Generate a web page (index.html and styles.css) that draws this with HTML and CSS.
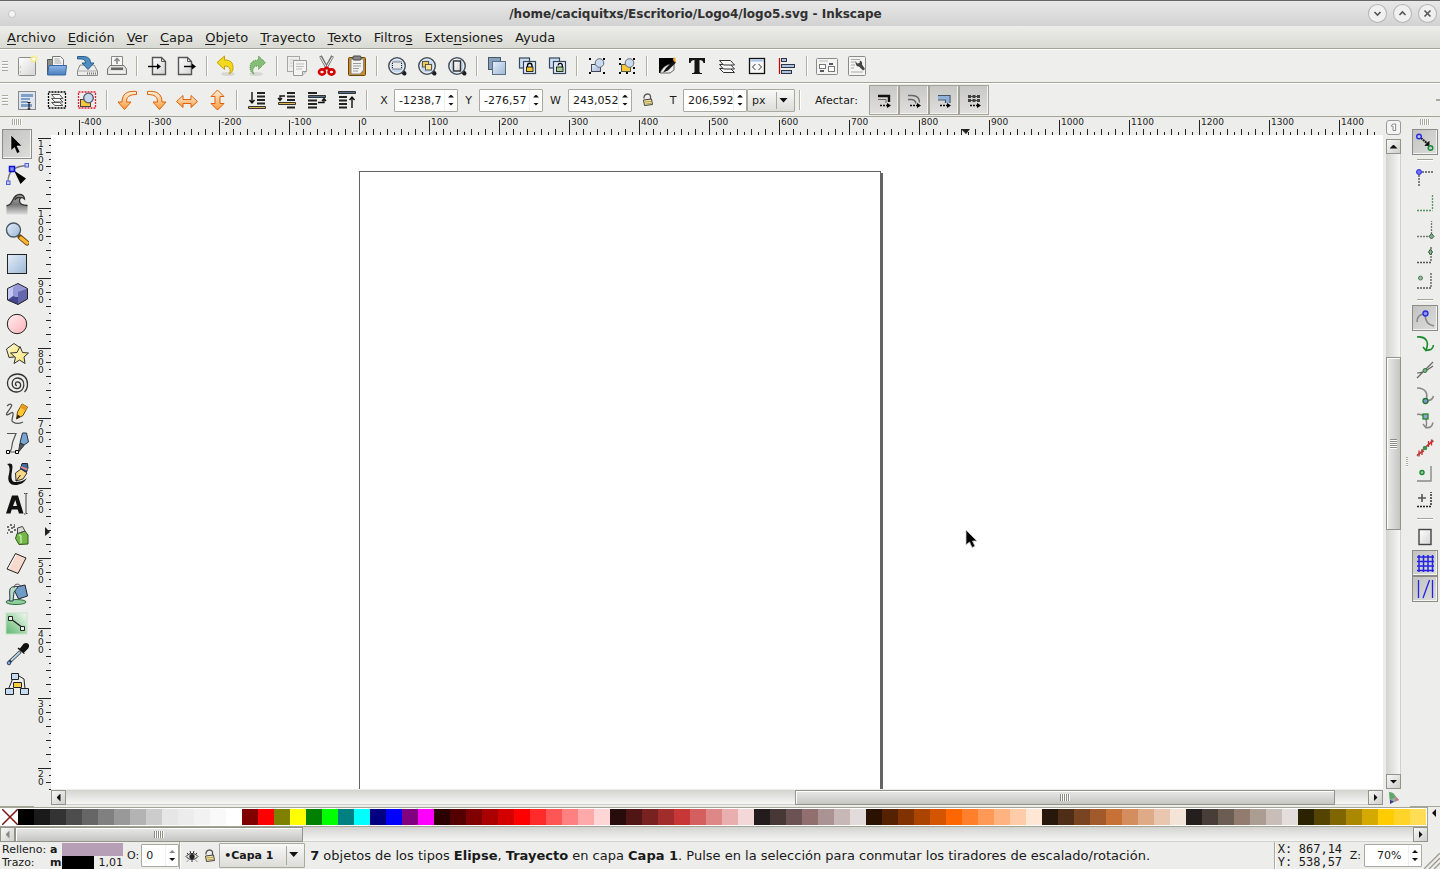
FILE: index.html
```html
<!DOCTYPE html>
<html lang="es">
<head>
<meta charset="utf-8">
<title>logo5.svg - Inkscape</title>
<link rel="stylesheet" href="styles.css">
</head>
<body>
<svg class="defs" aria-hidden="true">
  <defs>
    <linearGradient id="blue" x1="0" y1="0" x2="1" y2="1"><stop offset="0" stop-color="#e4eefa"/><stop offset="1" stop-color="#9db8d6"/></linearGradient>
    <linearGradient id="deep" x1="0" y1="0" x2="0" y2="1"><stop offset="0" stop-color="#8fb6e6"/><stop offset="1" stop-color="#4a7dbd"/></linearGradient>
    <linearGradient id="paper" x1="0" y1="0" x2="1" y2="1"><stop offset="0" stop-color="#ffffff"/><stop offset="1" stop-color="#d4d4d4"/></linearGradient>
    <linearGradient id="orange" x1="0" y1="0" x2="0" y2="1"><stop offset="0" stop-color="#fff0dc"/><stop offset="1" stop-color="#ff9a3c"/></linearGradient>
    <linearGradient id="gold" x1="0" y1="0" x2="1" y2="1"><stop offset="0" stop-color="#fffde0"/><stop offset="1" stop-color="#f7df62"/></linearGradient>
    <linearGradient id="pink" x1="0" y1="0" x2="1" y2="1"><stop offset="0" stop-color="#fff0f1"/><stop offset="1" stop-color="#ffb0b8"/></linearGradient>
    <linearGradient id="green" x1="0" y1="1" x2="1" y2="0"><stop offset="0" stop-color="#5cb56c"/><stop offset="1" stop-color="#f4fbf4"/></linearGradient>
    <linearGradient id="smoke" x1="0" y1="0" x2="0" y2="1"><stop offset="0" stop-color="#aaa"/><stop offset=".5" stop-color="#777"/><stop offset="1" stop-color="#dcdcdc"/></linearGradient>
    <symbol id="lens" viewBox="0 0 24 24"><path d="M17.500 17.500l2 2" stroke="#1c1f22" stroke-width="4" stroke-linecap="round"/><circle cx="12" cy="12" r="8.200" fill="#c3d6ec" stroke="#4b5157" stroke-width="1.600"/><circle cx="12" cy="12" r="6.900" fill="none" stroke="#eef5fc" stroke-width=".9"/></symbol>
    <symbol id="lock" viewBox="0 0 12 14"><path d="M2 5.500C1.500 0 8 0 8.500 3v3" fill="none" stroke="#555" stroke-width="1.300"/><path d="M1.500 7l8-1 1 5.500-8 1z" fill="#efe3a4" stroke="#444"/><path d="M3 9l6-.7M3.500 11l6-.7" stroke="#b9a04c"/></symbol>
  </defs>
</svg>

<div class="window">
  <header class="titlebar">
    <span class="titlebar-dot"></span>
    <h1 class="title">/home/caciquitxs/Escritorio/Logo4/logo5.svg - Inkscape</h1>
    <div class="window-buttons">
      <button class="window-button" aria-label="Minimizar"><svg viewBox="0 0 17 17"><path d="M5.500 7l3 3 3-3"/></svg></button>
      <button class="window-button" aria-label="Maximizar"><svg viewBox="0 0 17 17"><path d="M5.500 10l3-3 3 3"/></svg></button>
      <button class="window-button" aria-label="Cerrar"><svg viewBox="0 0 17 17"><path d="M5.500 5.500l6 6M11.500 5.500l-6 6"/></svg></button>
    </div>
  </header>

  <nav class="menubar">
    <button class="menu"><u>A</u>rchivo</button>
    <button class="menu"><u>E</u>dición</button>
    <button class="menu"><u>V</u>er</button>
    <button class="menu"><u>C</u>apa</button>
    <button class="menu"><u>O</u>bjeto</button>
    <button class="menu"><u>T</u>rayecto</button>
    <button class="menu"><u>T</u>exto</button>
    <button class="menu">Filtro<u>s</u></button>
    <button class="menu">Exte<u>n</u>siones</button>
    <button class="menu">Ayuda</button>
  </nav>

  <div class="toolbar" role="toolbar" aria-label="Comandos">
    <span class="grip"></span>
    <button class="tool" aria-label="Nuevo"><svg class="icon" viewBox="0 0 24 24"><rect x="3.500" y="3.500" width="17" height="18" rx="1" fill="url(#paper)" stroke="#8a8c88"/><path d="M5.500 12v2M5.500 17v2" stroke="#c4c4c4"/><circle cx="19" cy="5" r="3.600" fill="#f9ee7a" opacity=".8"/><circle cx="19" cy="5" r="1.700" fill="#fff"/></svg></button>
    <button class="tool" aria-label="Abrir"><svg class="icon" viewBox="0 0 24 24"><path d="M2.500 20V5.500h7l1 2h8V20z" fill="#8b8f8c" stroke="#555753"/><path d="M7.500 12V2.500h8l3 3V12z" fill="#f4f4f4" stroke="#777"/><path d="M9.500 5h5M9.500 7h6M9.500 9h7" stroke="#aaa"/><path d="M4 11.500h17.500l-1 9.500H2.500z" fill="url(#deep)" stroke="#3465a4"/></svg></button>
    <button class="tool" aria-label="Guardar"><svg class="icon" viewBox="0 0 24 24"><path d="M5 11h14l3.500 6v4.500h-20V17z" fill="#ececea" stroke="#888a85"/><path d="M2.500 17h20" stroke="#aaa"/><path d="M12 19.500h9" stroke="#777" stroke-width="2" stroke-dasharray="1 1"/><path d="M2.500 2.500H8c5 0 7.500 2 7.500 6.500h3.500l-6 6.500L7 9h3.500c0-3-2-4.500-8-4z" fill="#4f8cc0" stroke="#2b5d8c"/></svg></button>
    <button class="tool" aria-label="Imprimir"><svg class="icon" viewBox="0 0 24 24"><path d="M6.500 13V2.500h11V13" fill="#f7f7f7" stroke="#888"/><path d="M12 4v6M9.500 7L12 4.500 14.500 7" fill="none" stroke="#888" stroke-width="1.600"/><path d="M5 11.500h14l2.500 3.500v5.500h-19V15z" fill="#e0e0de" stroke="#777"/><rect x="6" y="13.500" width="12" height="2.500" fill="#666"/><path d="M4 18h16" stroke="#fff"/></svg></button>
    <span class="sep"></span>
    <button class="tool" aria-label="Importar"><svg class="icon" viewBox="0 0 24 24"><path d="M7.500 3.500h9l4 4v13h-13z" fill="url(#paper)" stroke="#555" stroke-width="1.400"/><path d="M16.500 3.500v4h4" fill="none" stroke="#555"/><path d="M3 12.500h9" stroke="#000" stroke-width="1.400"/><path d="M12 9.500v6l4-3z"/></svg></button>
    <button class="tool" aria-label="Exportar"><svg class="icon" viewBox="0 0 24 24"><path d="M3.500 3.500h9l4 4v13h-13z" fill="url(#paper)" stroke="#555" stroke-width="1.400"/><path d="M12.500 3.500v4h4" fill="none" stroke="#555"/><path d="M9 12.500h9" stroke="#000" stroke-width="1.400"/><path d="M17 9.500v6l4-3z"/></svg></button>
    <span class="sep"></span>
    <button class="tool" aria-label="Deshacer"><svg class="icon" viewBox="0 0 24 24"><ellipse cx="13" cy="20" rx="7" ry="2" fill="#d7d7d4"/><path d="M2 8.500L9.500 2v4c6 0 8.500 2.500 8.500 7.500 0 3-1 5-4 6.500 1-2 1.500-3 1-4.500-.5-2.500-2-3.500-5.500-3.500v3.500z" fill="#f2d91e" stroke="#c4a000"/></svg></button>
    <button class="tool" aria-label="Rehacer"><svg class="icon" viewBox="0 0 24 24"><ellipse cx="11" cy="20" rx="7" ry="2" fill="#d7d7d4"/><path d="M20.500 8.500L13.500 2v4C8 6 5 8.500 5 13.500c0 3 1 5 4 6.500-1-2-1.500-3-1-4.500.5-2.500 2-3.500 5.500-3.500v3.500z" fill="#86bd77" stroke="#4d9140" stroke-dasharray="1 1"/></svg></button>
    <span class="sep"></span>
    <button class="tool" aria-label="Copiar"><svg class="icon" viewBox="0 0 24 24"><rect x="2.500" y="2.500" width="12" height="15" fill="#efefee" stroke="#a6a8a3"/><path d="M4.500 6h8M4.500 9h3M4.500 12h3" stroke="#c9c9c9"/><path d="M8.500 6.500h13v11l-4 4h-9z" fill="#f4f4f3" stroke="#999b96"/><path d="M11 10h8M11 12.500h8M11 15h6" stroke="#bbb"/><path d="M17.500 21.500v-4h4" fill="#ddd" stroke="#999"/></svg></button>
    <button class="tool" aria-label="Cortar"><svg class="icon" viewBox="0 0 24 24"><path d="M5.500 2l7 13M17.500 2l-7 13" stroke="#777" stroke-width="3"/><path d="M5.500 3l7 12M17.500 3l-7 12" stroke="#eee"/><ellipse cx="7" cy="18" rx="3" ry="2.600" fill="none" stroke="#d40000" stroke-width="2.600"/><ellipse cx="16.500" cy="18" rx="3" ry="2.600" fill="none" stroke="#d40000" stroke-width="2.600"/><path d="M9 15.500l2.500-2 3 2" stroke="#d40000" stroke-width="2.400" fill="none"/></svg></button>
    <button class="tool" aria-label="Pegar"><svg class="icon" viewBox="0 0 24 24"><rect x="3.500" y="3.500" width="17" height="18" rx="1" fill="#c98a2b" stroke="#6f4706"/><path d="M6 5h12.500v11l-3.500 4H6z" fill="#f3f3f1" stroke="#888"/><rect x="8" y="2" width="8" height="4" rx="1" fill="#888" stroke="#444"/><path d="M8 9.500h8M8 12h8M8 14.500h6M8 17h5" stroke="#999"/></svg></button>
    <span class="sep"></span>
    <button class="tool" aria-label="Zoom a la selección"><svg class="icon" viewBox="0 0 24 24"><use href="#lens"/><rect x="7.500" y="8" width="9" height="7" fill="#e9e9e9" stroke="#222" stroke-dasharray="1 1"/></svg></button>
    <button class="tool" aria-label="Zoom al dibujo"><svg class="icon" viewBox="0 0 24 24"><use href="#lens"/><rect x="7.500" y="7.500" width="6" height="5.500" fill="#f3c84f" stroke="#555"/><rect x="10.500" y="10.500" width="6" height="5.500" fill="#ffe48d" stroke="#555"/></svg></button>
    <button class="tool" aria-label="Zoom a la página"><svg class="icon" viewBox="0 0 24 24"><use href="#lens"/><rect x="8.500" y="7" width="7" height="10" fill="url(#paper)" stroke="#333" stroke-width="1.400"/></svg></button>
    <span class="sep"></span>
    <button class="tool" aria-label="Duplicar"><svg class="icon" viewBox="0 0 24 24"><rect x="3.500" y="3.500" width="12" height="12" fill="#86a0bd" stroke="#47586b"/><rect x="7.500" y="7.500" width="13" height="13" fill="url(#blue)" stroke="#5b6f85"/></svg></button>
    <button class="tool" aria-label="Clonar"><svg class="icon" viewBox="0 0 24 24"><rect x="4.500" y="4" width="10" height="10" fill="#cfdff1" stroke="#33485e" stroke-width="1.200"/><rect x="8.500" y="7.500" width="12" height="12" fill="#e2ecf8" stroke="#33485e" stroke-width="1.200"/><path d="M12.500 13v-1.500a2.200 2.200 0 0 1 4.500 0V13" fill="none" stroke="#000" stroke-width="1.300"/><rect x="11.500" y="13" width="6.500" height="4.500" fill="#f6c52e" stroke="#000" stroke-width=".8"/></svg></button>
    <button class="tool" aria-label="Desvincular clon"><svg class="icon" viewBox="0 0 24 24"><rect x="4.500" y="4" width="10" height="10" fill="#cfdff1" stroke="#33485e" stroke-width="1.200"/><rect x="8.500" y="7.500" width="12" height="12" fill="#e2ecf8" stroke="#33485e" stroke-width="1.200"/><path d="M13 11.500a2.200 2.200 0 0 1 4.300-.5v2" fill="none" stroke="#000" stroke-width="1.300"/><rect x="11.500" y="13" width="6.500" height="4.500" fill="#a6cf8d" stroke="#000" stroke-width=".8"/></svg></button>
    <span class="sep"></span>
    <button class="tool" aria-label="Agrupar"><svg class="icon" viewBox="0 0 24 24"><path d="M4 4h2v2H4zM18 4h2v2h-2zM4 18h2v2H4zM18 18h2v2h-2z"/><rect x="6.500" y="10.500" width="9" height="7" fill="url(#blue)" stroke="#445"/><circle cx="14.500" cy="9" r="4.300" fill="#c9dbef" stroke="#667"/></svg></button>
    <button class="tool" aria-label="Desagrupar"><svg class="icon" viewBox="0 0 24 24"><path d="M4 4h2v2H4zM18 4h2v2h-2zM4 18h2v2H4zM18 18h2v2h-2zM4 9h2v2H4zM11 18h2v2h-2zM18 13h2v2h-2z"/><rect x="6.500" y="10.500" width="9" height="7" fill="#f7c737" stroke="#554"/><circle cx="14.500" cy="9" r="4.300" fill="#c9dbef" stroke="#667"/></svg></button>
    <span class="sep"></span>
    <button class="tool" aria-label="Relleno y borde"><svg class="icon" viewBox="0 0 24 24"><path d="M4 4h15v3l-9 9-4 3H4z" fill="#000"/><path d="M5 19c3-7 8-9 12-9l2-2v8l-4 3z" fill="#eee" stroke="#444" stroke-width=".8"/><path d="M19 6l2 2.500-8 8-5 2 3-4.500z" fill="#111"/><path d="M18.500 3.500l2 .5v5l-2.500-3z" fill="#f4a42c"/></svg></button>
    <button class="tool" aria-label="Texto y tipografía"><svg class="icon" viewBox="0 0 24 24"><path d="M4 4h16v5h-1.500c-.5-2-1.500-3-4-3v11.500c0 1 .8 1.500 2.500 1.500v1H7v-1c1.700 0 2.500-.5 2.500-1.500V6c-2.500 0-3.500 1-4 3H4z" fill="#151515"/></svg></button>
    <button class="tool" aria-label="Capas"><svg class="icon" viewBox="0 0 24 24"><g fill="#f8f8f8" stroke="#333"><path d="M4.500 14.500h11l4 4h-11z"/><path d="M4.500 10.500h11l4 4.500h-11z"/><path d="M4.500 6.500h11l4 4.500h-11z"/></g></svg></button>
    <button class="tool" aria-label="Editor XML"><svg class="icon" viewBox="0 0 24 24"><rect x="4.500" y="4.500" width="15" height="15" fill="#f6f6f6" stroke="#111" stroke-width="1.300"/><path d="M5 6.500h14" stroke="#a3c3e6" stroke-width="2"/><path d="M10.500 10l-3 3 3 3M13.500 10l3 3-3 3" fill="none" stroke="#333"/></svg></button>
    <button class="tool" aria-label="Alinear"><svg class="icon" viewBox="0 0 24 24"><path d="M4.500 4v16" stroke="#d40000" stroke-width="1.200"/><rect x="6.500" y="4.500" width="5" height="3" fill="#a9c3e4" stroke="#334"/><rect x="6.500" y="10.500" width="13" height="3" fill="#a9c3e4" stroke="#334"/><rect x="6.500" y="16.500" width="10" height="3" fill="#a9c3e4" stroke="#334"/></svg></button>
    <span class="sep"></span>
    <button class="tool" aria-label="Preferencias"><svg class="icon" viewBox="0 0 24 24"><rect x="1.500" y="4.500" width="21" height="16" rx="1" fill="#f4f4f3" stroke="#8a8c88"/><path d="M4 7h9" stroke="#bbb"/><rect x="4.500" y="10.500" width="6" height="4" fill="#fff" stroke="#777"/><rect x="13.500" y="12.500" width="6" height="5" fill="#fff" stroke="#777"/><path d="M5 16h4v2H5zM14 9h4v2h-4z" fill="#556"/></svg></button>
    <button class="tool" aria-label="Propiedades del documento"><svg class="icon" viewBox="0 0 24 24"><rect x="3.500" y="2.500" width="17" height="19" rx="1" fill="#f4f4f3" stroke="#8a8c88"/><path d="M6 5.500h9M6 8h5M6 11h4M6 14h3M6 18h12" stroke="#aaa"/><path d="M10.500 7.500l2 2 2-.5.500-2.500c2 1 2.500 2.500 2 4l3 4.500-2 1.500-4-4c-2 .5-3.500-1.500-3.500-5z" fill="#444"/></svg></button>
  </div>

  <div class="toolbar" role="toolbar" aria-label="Controles de selección">
    <span class="grip"></span>
    <button class="tool" aria-label="Seleccionar todo"><svg class="icon" viewBox="0 0 24 24"><rect x="3.500" y="3.500" width="17" height="18" fill="#dfe6ef" stroke="#888"/><path d="M6 6h12v3H6zM6 10h9v2H6zM6 13h7v2H6zM6 16h11v3H6z" fill="#7f9fc6"/><path d="M12.500 14.500H14V21h-1.500M15.500 14.500H14M14 21h1.500" stroke="#000" fill="none"/></svg></button>
    <button class="tool" aria-label="Seleccionar en todas las capas"><svg class="icon" viewBox="0 0 24 24"><rect x="3.500" y="4" width="17" height="16" fill="none" stroke="#000" stroke-width="1.300" stroke-dasharray="2 1"/><g fill="#fafafa" stroke="#555"><path d="M6.500 14.500h8l3.500 3h-8z"/><path d="M6.500 10.500h8l3.500 3.500h-8z"/><path d="M6.500 6.500h8l3.500 4h-8z"/></g></svg></button>
    <button class="tool" aria-label="Deseleccionar"><svg class="icon" viewBox="0 0 24 24"><rect x="3.500" y="4" width="17" height="16" fill="none" stroke="#e0203a" stroke-width="1.300" stroke-dasharray="2 1"/><rect x="5.500" y="11.500" width="10" height="7" fill="#f7c737" stroke="#444"/><circle cx="13.500" cy="10" r="4.800" fill="#c3d7ee" stroke="#556" stroke-width="1.300"/></svg></button>
    <span class="sep"></span>
    <button class="tool" aria-label="Rotar a la izquierda"><svg class="icon" viewBox="0 0 24 24"><path d="M21.500 3.500C12 2.500 7 6 7 14H3l6.500 7.500 6.500-7.500h-4.500C11.500 9 14 6.500 21.500 6.500z" fill="url(#orange)" stroke="#d9630a"/></svg></button>
    <button class="tool" aria-label="Rotar a la derecha"><svg class="icon" viewBox="0 0 24 24"><path d="M2.500 3.500C12 2.500 17 6 17 14h4l-6.500 7.500L8 14h4.500C12.500 9 10 6.500 2.500 6.500z" fill="url(#orange)" stroke="#d9630a"/></svg></button>
    <button class="tool" aria-label="Reflejar horizontalmente"><svg class="icon" viewBox="0 0 24 24"><path d="M1.500 13.500L8 7.500v4h8v-4l6.500 6-6.500 6v-4H8v4z" fill="url(#orange)" stroke="#d9630a"/></svg></button>
    <button class="tool" aria-label="Reflejar verticalmente"><svg class="icon" viewBox="0 0 24 24"><path d="M12.500 2l6.500 6.500h-4v7h4L12.500 22 6 15.500h4v-7H6z" fill="url(#orange)" stroke="#d9630a"/></svg></button>
    <span class="sep"></span>
    <button class="tool" aria-label="Bajar al fondo"><svg class="icon" viewBox="0 0 24 24"><path d="M12 5h8M12 8.500h8M12 12h8M12 15.500h8" stroke="#222" stroke-width="1.800"/><path d="M3.500 18.500h17v2h-17z" fill="#e2b84e" stroke="#333"/><path d="M7 4v10M4.500 12L7 15l2.500-3" fill="none" stroke="#111" stroke-width="1.400"/></svg></button>
    <button class="tool" aria-label="Bajar"><svg class="icon" viewBox="0 0 24 24"><path d="M12 5h8M12 8.500h8M12 12h8M12 19.500h8" stroke="#222" stroke-width="1.800"/><path d="M3.500 14.500h17v2h-17z" fill="#e2b84e" stroke="#333"/><path d="M10 8H5v4M3 10l2 2.500L7 10" fill="none" stroke="#111" stroke-width="1.300"/></svg></button>
    <button class="tool" aria-label="Elevar"><svg class="icon" viewBox="0 0 24 24"><path d="M3 5h9M3 12.500h9M3 16h9M3 19.500h9" stroke="#222" stroke-width="1.800"/><path d="M3.500 7.500h17v2h-17z" fill="#536f92" stroke="#333"/><path d="M13 14.500h6V11M17 13l2-2.500 2 2.500" fill="none" stroke="#111" stroke-width="1.300"/></svg></button>
    <button class="tool" aria-label="Elevar al frente"><svg class="icon" viewBox="0 0 24 24"><path d="M4 9h8M4 12.500h8M4 16h8M4 19.500h8" stroke="#222" stroke-width="1.800"/><path d="M3.500 3.500h17v2h-17z" fill="#536f92" stroke="#333"/><path d="M17 20V9.500M14.500 12L17 9l2.500 3" fill="none" stroke="#111" stroke-width="1.400"/></svg></button>
    <span class="sep"></span>
    <label class="caption caption-x" for="pos-x">X</label>
    <span class="spin"><input id="pos-x" class="spin-text" value="-1238,7"><span class="arrows"><button class="up" aria-label="Más"></button><button class="down" aria-label="Menos"></button></span></span>
    <label class="caption" for="pos-y">Y</label>
    <span class="spin"><input id="pos-y" class="spin-text" value="-276,57"><span class="arrows"><button class="up" aria-label="Más"></button><button class="down" aria-label="Menos"></button></span></span>
    <label class="caption caption-w" for="size-w">W</label>
    <span class="spin"><input id="size-w" class="spin-text" value="243,052"><span class="arrows"><button class="up" aria-label="Más"></button><button class="down" aria-label="Menos"></button></span></span>
    <button class="lock-button" aria-label="Bloquear proporción"><svg class="lock-icon" viewBox="0 0 12 14"><use href="#lock"/></svg></button>
    <label class="caption caption-t" for="size-t">T</label>
    <span class="spin"><input id="size-t" class="spin-text" value="206,592"><span class="arrows"><button class="up" aria-label="Más"></button><button class="down" aria-label="Menos"></button></span></span>
    <span class="combo combo-unit"><select class="combo-select" aria-label="Unidad"><option>px</option></select></span>
    <span class="sep"></span>
    <span class="affect-label">Afectar:</span>
    <div class="toggles">
      <button class="toggle" aria-pressed="true" aria-label="Escalar grosor de trazo"><svg class="icon" viewBox="0 0 24 24"><path d="M6 8h11v6" fill="none" stroke="#111" stroke-width="2.400"/><path d="M6 11.500h8V15" fill="none" stroke="#666"/><path d="M8 17.500h7" stroke="#111" stroke-width="1.300" stroke-dasharray="2 1"/><path d="M15 15v5l4-2.500z"/></svg></button>
      <button class="toggle" aria-pressed="true" aria-label="Escalar esquinas"><svg class="icon" viewBox="0 0 24 24"><path d="M6 7.500h4c5 0 7.500 3 7.500 7M6 11.500h3c3 0 4.500 1.500 5 4" fill="none" stroke="#666" stroke-width="1.400"/><path d="M8 17.500h7" stroke="#111" stroke-width="1.300" stroke-dasharray="2 1"/><path d="M15 15v5l4-2.500z"/></svg></button>
      <button class="toggle" aria-pressed="true" aria-label="Mover degradados"><svg class="icon" viewBox="0 0 24 24"><path d="M6 9.500h9.500V15" fill="none" stroke="#8fb2da" stroke-width="4"/><path d="M6 7.500h12V15M6 12h7.500v3" fill="none" stroke="#445566" stroke-width="1.200"/><path d="M8 17.500h7" stroke="#111" stroke-width="1.300" stroke-dasharray="2 1"/><path d="M15 15v5l4-2.500z"/></svg></button>
      <button class="toggle" aria-pressed="true" aria-label="Mover patrones"><svg class="icon" viewBox="0 0 24 24"><path d="M6 8.500h12M6 12.500h12" stroke="#111" stroke-width="2.600" stroke-dasharray="3 1.500"/><path d="M6 8.500h12M6 12.500h12" stroke="#444"/><path d="M8 17.500h7" stroke="#111" stroke-width="1.300" stroke-dasharray="2 1"/><path d="M15 15v5l4-2.500z"/></svg></button>
    </div>
    <span class="toolbar-end"></span>
  </div>

  <main class="main">
    <aside class="toolbox" aria-label="Herramientas">
      <span class="grip-top"></span>
      <button class="tool pressed" aria-label="Selector"><svg class="icon" viewBox="0 0 24 24"><path d="M6 3l11 11h-5l3 6-3 1.500-2.500-6L6 18.500z" fill="#000" stroke="#fff" stroke-width=".5"/></svg></button>
      <button class="tool" aria-label="Nodos"><svg class="icon" viewBox="0 0 24 24"><path d="M3 20C3 10 9 4 22 3.500" fill="none" stroke="#777" stroke-width="1.300"/><path d="M9 8.500l12 8-5.500 5.500z"/><rect x="4.500" y="4.500" width="5" height="5" fill="#7f8ff0" stroke="#0a14d6" stroke-width="1.500"/><rect x="20" y="1.500" width="3.500" height="3.500" fill="#c5caf6" stroke="#5060d8"/><rect x="1.500" y="19" width="3.500" height="3.500" fill="#c5caf6" stroke="#5060d8"/></svg></button>
      <button class="tool" aria-label="Retocar"><svg class="icon" viewBox="0 0 24 24"><path d="M1.500 13.500c7 1 5-11 13-11 3 0 5 2 5 4.500-2-2-5-2-5 1.500 0 4 3 5 8 5v9h-21z" fill="url(#smoke)"/><path d="M1.500 13.500c7 1 5-11 13-11 3 0 5 2 5 4.500-2-2-5-2-5 1.500 0 4 3 5 8 5M10 8c1-3 5-3 6-2" fill="none" stroke="#333" stroke-width="1.300"/></svg></button>
      <button class="tool" aria-label="Zoom"><svg class="icon" viewBox="0 0 24 24"><path d="M15 15l7 6" stroke="#6a4a12" stroke-width="5" stroke-linecap="round"/><path d="M16 16l6 5" stroke="#ffb52e" stroke-width="3.400" stroke-linecap="round"/><circle cx="8.500" cy="8" r="7" fill="url(#blue)" stroke="#4a5866" stroke-width="1.400"/></svg></button>
      <button class="tool" aria-label="Rectángulo"><svg class="icon" viewBox="0 0 24 24"><rect x="2.500" y="2.500" width="19" height="19" fill="url(#blue)" stroke="#222"/></svg></button>
      <button class="tool" aria-label="Caja 3D"><svg class="icon" viewBox="0 0 24 24"><path d="M2.500 6.500L13 1.500l9.500 5V17L13 22.500 2.500 18z" fill="#c4c7f2"/><path d="M2.500 18l5.500-4 14.500 3-9.500 5.500z" fill="#45478e"/><path d="M8 5.500L13 1.500l9.500 5V17L8 14z" fill="#9699d8"/><path d="M13 10l9.500-3.500V17L13 22.500z" fill="#6467ae"/><path d="M2.500 6.500L13 1.500l9.500 5V17L13 22.500 2.500 18z" fill="none" stroke="#222"/></svg></button>
      <button class="tool" aria-label="Elipse"><svg class="icon" viewBox="0 0 24 24"><circle cx="12" cy="12" r="9.700" fill="url(#pink)" stroke="#222"/></svg></button>
      <button class="tool" aria-label="Estrella"><svg class="icon" viewBox="0 0 24 24"><path d="M1.500 7L9 1.500l6.500 4.500-2 8.500-9.500 1z" fill="url(#gold)" stroke="#333"/><path d="M15 4.500l2.500 6 6 .5-4.500 4 1 6.500-5.500-3.500L9 21.500l1.500-6-5-4.500 6.500-.5z" fill="url(#gold)" stroke="#333"/></svg></button>
      <button class="tool" aria-label="Espiral"><svg class="icon" viewBox="0 0 24 24"><path d="M12 13.500c-2.500 0-2-4 1-3.500 4 .5 3.500 7-1.500 6.500-6.500-.5-5.500-11 1.500-10.500 8.500.5 7.500 14.500-1.500 14C-1 19.500-.5 2 12.500 2c6 0 10 4 10 10 0 4-1 6-3 8" fill="none" stroke="#333" stroke-width="1.300"/></svg></button>
      <button class="tool" aria-label="Lápiz"><svg class="icon" viewBox="0 0 24 24"><path d="M2 4c3-3 6-2 4 1-2 4-6 7-4 8 2 0 5-4 6-2 1 3-3 8 0 9 3 2 6 2 10 0" fill="none" stroke="#555" stroke-width="1.300"/><path d="M11.500 17l1-7L17 2l5.500 3-4.500 8.500z" fill="#ffc636" stroke="#6d4a06"/><path d="M11.500 17l1-4.500 3 2z" fill="#222"/><path d="M17 2l5.500 3-2 3.500-5.500-3z" fill="#e79a1d"/></svg></button>
      <button class="tool" aria-label="Bézier"><svg class="icon" viewBox="0 0 24 24"><path d="M2 1.500h9L8 9c-2 5 0 9-4 11h8" fill="none" stroke="#555" stroke-width="1.200"/><path d="M17.500 1h4l2 9-4.500 3-4-2.500z" fill="#7aa5d2" stroke="#234"/><path d="M15 11l4 2.500-5.500 6.500z" fill="#556" stroke="#333"/><path d="M1.500 18.500h3v3h-3zM10.500 18.500h3v3h-3z" fill="#fff" stroke="#000"/></svg></button>
      <button class="tool" aria-label="Caligrafía"><svg class="icon" viewBox="0 0 24 24"><path d="M2 2c6-2 6 2 5 7s-1 11 3 11c5 0 8-1 12-4-3 5-7 7-12 7-6 0-8-5-6-11 1-5 1-8-2-10z" fill="#111"/><path d="M11 19l-.5-8 5.500-4 6 4-4 6z" fill="#f8d98a" stroke="#333"/><path d="M15.500 6.500L17 1.500h5.500L23 6l-1.500 4z" fill="#426a9c" stroke="#223"/><path d="M16 5l6.500 2.500" stroke="#e88" stroke-width="1.500"/><path d="M11 19l4.500-6" stroke="#222"/></svg></button>
      <button class="tool" aria-label="Texto"><svg class="icon" viewBox="0 0 24 24"><path d="M1 21.500L7 3.500h6l5.500 18h-4.500l-1.300-4h-6l-1.200 4zM8 14h4L10.300 8z" fill="#111"/><path d="M19 1.500h1.500M22.500 1.500H21v20h1.500M19 22h1.500" fill="none" stroke="#444"/></svg></button>
      <button class="tool" aria-label="Aerógrafo"><svg class="icon" viewBox="0 0 24 24"><path d="M2 5h2M5 3h2M8 5h2M3 8h2M6 6h2M5 10h3M9 8h2M2 11h1M9 3h1" stroke="#444" stroke-width="1.400"/><path d="M12 11.500l8-2.500 3 4v9l-9 .5-3.500-6z" fill="#74b84a" stroke="#2e5a16"/><path d="M14 13l2 1v7" fill="none" stroke="#c9e8b1" stroke-width="1.500"/><path d="M12.500 6l5-1.500L20 9l-7.500 2.500z" fill="#ddd" stroke="#444"/></svg></button>
      <button class="tool" aria-label="Goma"><svg class="icon" viewBox="0 0 24 24"><path d="M10.500 1.500L21 6l-8 15.500L2 17z" fill="#f7d9cd" stroke="#222"/><path d="M11 3L3.500 16.500" stroke="#fff"/></svg></button>
      <button class="tool" aria-label="Relleno de color"><svg class="icon" viewBox="0 0 24 24"><ellipse cx="11" cy="20" rx="10" ry="2.500" fill="#8ed09b" stroke="#2f6b3b"/><path d="M8 5.500l12-2.500 2.500 11-9 3z" fill="#6f9cc4" stroke="#223"/><path d="M5 7c2-3 5-3 8-2l-4 5-1 9H4.500C5.500 15 4 11 5 7z" fill="#b7dfc0" stroke="#335"/><path d="M9 6c0-5 6-5 7-1" fill="none" stroke="#555"/></svg></button>
      <button class="tool" aria-label="Degradado"><svg class="icon" viewBox="0 0 24 24"><rect x="1" y="1" width="21" height="21" fill="url(#green)" stroke="#c8e2cb"/><path d="M6 7l12 9" stroke="#222" stroke-width="1.300"/><path d="M3.500 4.500h4v4h-4zM15.500 14.500h4v4h-4z" fill="#e8f3e8" stroke="#222"/></svg></button>
      <button class="tool" aria-label="Selector de color"><svg class="icon" viewBox="0 0 24 24"><path d="M15.500 9.500L6.500 18l-2 2" stroke="#333" stroke-width="3.200"/><path d="M15 10L6 18.500" stroke="#b8d5ef" stroke-width="1.800"/><path d="M13 6l6.500 5.500M15.500 7l3.500-4.500c3-2 5.500.5 3.500 3.500L18.500 10z" fill="#111" stroke="#111" stroke-width="1.600"/><circle cx="4" cy="21" r="1.800" fill="#7ba9dc" stroke="#346"/></svg></button>
      <button class="tool" aria-label="Conector"><svg class="icon" viewBox="0 0 24 24"><path d="M8 6L3.500 17M14 4l5 3 1 10" fill="none" stroke="#222"/><g fill="#c6daf1" stroke="#222"><path d="M6.500 1.500h7v6h-7zM.5 16.500h8v6h-8zM15.500 16.500h8v6h-8z"/></g><path d="M8.500 10.500h8v5h-8z" fill="#f9cf3e" stroke="#222"/></svg></button>
      <span class="dock-line"></span>
    </aside>

    <section class="desk">
      <svg class="ruler-x" id="ruler-x" aria-label="Regla horizontal"></svg>
      <button class="zoom-lock" aria-label="Ampliar al redimensionar"><svg viewBox="0 0 15 15"><path d="M5 5l2-1.500h3V11H7V6H5z" fill="#fff" stroke="#777"/></svg></button>
      <svg class="ruler-y" id="ruler-y" aria-label="Regla vertical"></svg>
      <div class="canvas">
        <div class="page"></div>
        <div class="page-shadow"></div>
        <svg class="pointer" viewBox="0 0 14 20"><path d="M1 1v15l3.500-3 2.500 5.500 3-1.200L7.500 12H12z" fill="#000" stroke="#ccc" stroke-width=".8"/></svg>
      </div>
      <div class="scroll-y">
        <button class="step up" aria-label="Arriba"></button>
        <div class="track-y"><span class="space-top"></span><span class="thumb-y"></span><span class="space-bottom"></span></div>
        <button class="step down" aria-label="Abajo"></button>
      </div>
      <div class="scroll-x">
        <button class="step left" aria-label="Izquierda"></button>
        <div class="track-x"><span class="space-left"></span><span class="thumb-x"></span><span class="space-right"></span></div>
        <button class="step right" aria-label="Derecha"></button>
      </div>
      <button class="cms" aria-label="Gestión de color"><svg viewBox="0 0 15 15"><path d="M3 2l4 1 6 7-9 4z" fill="#9aa"/><path d="M3 2l4 1 3 4-6 3z" fill="#5fa86a"/><path d="M10 7l3 3-4 1.500z" fill="#c77"/><path d="M4 10l4 1.500L4 14z" fill="#3a3a92"/></svg></button>
    </section>

    <span class="dock-grip"></span>
    <aside class="snapbar" aria-label="Ajuste">
      <span class="grip-top"></span>
      <button class="snap pressed" aria-label="Activar ajuste"><svg class="icon" viewBox="0 0 24 24"><path d="M8 8l7 6" stroke="#222" stroke-width="2" stroke-dasharray="2 .6"/><path d="M12 15.500h4v-4z" stroke="#222"/><circle cx="6" cy="6.500" r="2.300" fill="#bcc4f8" stroke="#2b2bdc" stroke-width="1.400"/><circle cx="17.500" cy="18" r="2.300" fill="#b9c9e8" stroke="#1b8a2c" stroke-width="1.400"/></svg></button>
      <span class="sep-h"></span>
      <button class="snap" aria-label="Ajustar cajas"><svg class="icon" viewBox="0 0 24 24"><path d="M6 7h14M6 7v14" stroke="#555" stroke-width="1.400" stroke-dasharray="2 1" fill="none"/><circle cx="6" cy="7" r="2.500" fill="#6f74f5" stroke="#2b2bdc"/></svg></button>
      <button class="snap" aria-label="Ajustar bordes"><svg class="icon" viewBox="0 0 24 24"><path d="M4 19.500h15.500M19.500 18V4" stroke="#5a9562" stroke-width="1.300" stroke-dasharray="2 1"/></svg></button>
      <button class="snap" aria-label="Ajustar esquinas"><svg class="icon" viewBox="0 0 24 24"><path d="M4 19.500h14M18.500 17V4" stroke="#777" stroke-width="1.300" stroke-dasharray="2 1"/><path d="M18.500 16.500l2.500 3-2.500 2.500-2.500-2.500z" fill="#8fa595" stroke="#2e6138"/></svg></button>
      <button class="snap" aria-label="Ajustar puntos medios"><svg class="icon" viewBox="0 0 24 24"><path d="M4 19.500h14M18 18V4" stroke="#555" stroke-width="1.300" stroke-dasharray="2 1"/><path d="M17.500 6l2 3-2 3-2-3z" fill="#8fa595" stroke="#2e6138"/></svg></button>
      <button class="snap" aria-label="Ajustar centros"><svg class="icon" viewBox="0 0 24 24"><path d="M4 19h14M18 18V4" stroke="#555" stroke-width="1.300" stroke-dasharray="2 1"/><circle cx="7.500" cy="9" r="2" fill="#9fb8a4" stroke="#4d7f56"/></svg></button>
      <span class="sep-h wide"></span>
      <button class="snap pressed" aria-label="Ajustar nodos"><svg class="icon" viewBox="0 0 24 24"><path d="M4 16C4 10 7 8 12 8c0 6 2 11 9 12" fill="none" stroke="#888" stroke-width="1.600"/><circle cx="12.500" cy="7.500" r="2.500" fill="#8c93f5" stroke="#2b2bdc" stroke-width="1.300"/></svg></button>
      <button class="snap" aria-label="Ajustar a trayectos"><svg class="icon" viewBox="0 0 24 24"><path d="M4 5c8-1 13 4 9 13 4 1 7-1 7.500-5M10 15l3 3.500 4-1" fill="none" stroke="#1b8a2c" stroke-width="1.600"/></svg></button>
      <button class="snap" aria-label="Intersecciones"><svg class="icon" viewBox="0 0 24 24"><path d="M4 20L20 4M4 15c6 0 12-4 16-7" fill="none" stroke="#666" stroke-width="1.200"/><circle cx="12" cy="12.500" r="2" fill="#7fae86" stroke="#357c40"/></svg></button>
      <button class="snap" aria-label="Nodos vértice"><svg class="icon" viewBox="0 0 24 24"><path d="M4 4c8 0 12 5 8.500 13 4 0 7-1 8-5" fill="none" stroke="#888" stroke-width="1.600"/><circle cx="12.500" cy="17" r="2.500" fill="#8794d8" stroke="#1b7a2c" stroke-width="1.300"/></svg></button>
      <button class="snap" aria-label="Nodos suaves"><svg class="icon" viewBox="0 0 24 24"><path d="M4 4.500c7-1 11 4 9 13 4 1 6-1 7-5M10 14l3 4 4-1" fill="none" stroke="#888" stroke-width="1.500"/><rect x="10" y="4" width="5" height="5" fill="#94a2cf" stroke="#1b8a2c" stroke-width="1.300"/></svg></button>
      <button class="snap" aria-label="Puntos medios de línea"><svg class="icon" viewBox="0 0 24 24"><path d="M4 20L20 4" stroke="#777" stroke-width="1.500"/><path d="M6 14.500v6M9 13v6M15.500 5v6M18.500 3.500v6M4 19l7-4M13.500 10l7-5" stroke="#cf2b2b" stroke-width="1.300"/><circle cx="12" cy="12" r="2.300" fill="#3e9150"/></svg></button>
      <button class="snap" aria-label="Otros puntos"><svg class="icon" viewBox="0 0 24 24"><path d="M4 19h14V4" fill="none" stroke="#888" stroke-width="1.400"/><circle cx="9" cy="10.500" r="2" fill="#a6c8ac" stroke="#1b8a2c" stroke-width="1.400"/></svg></button>
      <button class="snap" aria-label="Centro de rotación"><svg class="icon" viewBox="0 0 24 24"><path d="M5 10h8M9 6v8" stroke="#555" stroke-width="1.600"/><path d="M4 18.500h14M18 17V4" stroke="#222" stroke-width="1.400" stroke-dasharray="2 1"/></svg></button>
      <span class="sep-h wide"></span>
      <button class="snap" aria-label="Borde de página"><svg class="icon" viewBox="0 0 24 24"><rect x="6" y="4.500" width="12" height="15" fill="url(#paper)" stroke="#444" stroke-width="1.400"/></svg></button>
      <button class="snap pressed" aria-label="Rejilla"><svg class="icon" viewBox="0 0 24 24"><path d="M4 6h17M4 10.500h17M4 15h17M4 19.500h17M6 4v17M10.500 4v17M15 4v17M19.500 4v17" stroke="#2323e6" stroke-width="1.500"/></svg></button>
      <button class="snap pressed" aria-label="Guías"><svg class="icon" viewBox="0 0 24 24"><path d="M5.500 3v18M19.500 3v18M10 21l6.500-18" stroke="#2323e6" stroke-width="1.300"/></svg></button>
      <span class="dock-line"></span>
    </aside>
  </main>

  <section class="palette" aria-label="Paleta">
    <div class="palette-body">
      <div class="swatches" id="swatches"><button class="swatch none" aria-label="Ninguno"><svg viewBox="0 0 16 16"><path d="M0 0l16 16M16 0L0 16" stroke="#7c1515" stroke-width="1.500"/></svg></button></div>
      <div class="scroll-palette">
        <button class="step left disabled" aria-label="Izquierda"></button>
        <div class="track-x"><span class="thumb-x"></span></div>
        <button class="step right" aria-label="Derecha"></button>
      </div>
    </div>
    <button class="palette-menu left" aria-label="Menú de paleta"></button>
  </section>

  <footer class="statusbar">
    <div class="style-box">
      <span class="style-name">Relleno:</span><b class="style-flag">a</b><span class="fill-chip"></span>
      <span class="style-name">Trazo:</span><b class="style-flag">m</b><span class="stroke-row"><span class="stroke-chip"></span><span>1,01</span></span>
    </div>
    <label class="opacity-label" for="opacity">O:</label>
    <span class="spin spin-opacity"><input id="opacity" class="spin-text" value="0"><span class="arrows"><button class="up disabled" aria-label="Más"></button><button class="down" aria-label="Menos"></button></span></span>
    <span class="status-line"></span>
    <button class="status-icon" aria-label="Visibilidad"><svg viewBox="0 0 14 14"><path d="M1 7.500c3-4 9-4 12 0-3 4-9 4-12 0z" fill="#ddd" stroke="#333"/><circle cx="7" cy="7.500" r="2.600" fill="#222"/><path d="M2 4l1.500 1.500M5 2l.7 2M9 2l-.7 2M12 4l-1.500 1.500M3 11.500l-1 1M7 11v2M11 11.500l1 1" stroke="#333"/></svg></button>
    <button class="status-icon" aria-label="Bloquear capa"><svg viewBox="0 0 12 14"><use href="#lock"/></svg></button>
    <span class="combo combo-layer"><select class="combo-select" aria-label="Capa"><option>•Capa 1</option></select></span>
    <p class="message"><b>7</b> objetos de los tipos <b>Elipse</b>, <b>Trayecto</b> en capa <b>Capa 1</b>. Pulse en la selección para conmutar los tiradores de escalado/rotación.</p>
    <span class="status-line"></span>
    <div class="coords"><span>X:</span><span>867,14</span><span>Y:</span><span>538,57</span></div>
    <label class="zoom-label" for="zoom">Z:</label>
    <span class="spin spin-zoom"><input id="zoom" class="spin-text" value="70%"><span class="arrows"><button class="up" aria-label="Más"></button><button class="down" aria-label="Menos"></button></span></span>
    <svg class="resize-grip" viewBox="0 0 16 16"><path d="M0 16L16 0M5 16L16 5M10 16l6-6" stroke="#9b9b8f" stroke-width="1.300"/></svg>
  </footer>
</div>
<script src="app.js"></script>
</body>
</html>
```
FILE: styles.css
```css
* {
  box-sizing: border-box;
}

body {
  margin: 0;
  font-family: "DejaVu Sans", sans-serif;
  font-size: 11px;
  color: #1a1a1a;
  background: #ededeb;
}

button,
input,
select {
  margin: 0;
  padding: 0;
  border: 0;
  background: none;
  font: inherit;
  color: inherit;
}

svg {
  display: block;
  flex: none;
}

.defs {
  position: absolute;
  width: 0;
  height: 0;
}

.window {
  display: flex;
  flex-direction: column;
  height: 100vh;
  overflow: hidden;
}

/* Title bar */
.titlebar {
  display: grid;
  grid-template-columns: 22px 1fr 71px;
  align-items: center;
  flex: none;
  height: 26px;
  border-top: 1px solid #69666a;
  background: linear-gradient(#e8e8e8, #d2d2d2);
}

.titlebar-dot {
  width: 8px;
  height: 8px;
  margin-left: 8px;
  border: 1px solid #c4c4c4;
  border-radius: 50%;
  background: #f6f6f6;
}

.title {
  margin: 0;
  font-size: 12px;
  line-height: 24px;
  text-align: center;
  color: #303030;
  white-space: nowrap;
}

.window-buttons {
  display: flex;
  gap: 8px;
}

.window-button {
  width: 17px;
  height: 17px;
  border-radius: 50%;
  background: #f0f0f0;
  box-shadow: 0 0 0 1px #b4b4b4;
}

.window-button svg {
  width: 17px;
  height: 17px;
  fill: none;
  stroke: #555;
  stroke-width: 1.6;
}

/* Menu bar */
.menubar {
  display: flex;
  flex: none;
  gap: 12px;
  height: 23px;
  padding-left: 7px;
  border-bottom: 1px solid #a5a597;
  background: linear-gradient(#edeeea, #d9dad3);
}

.menu {
  padding-top: 1px;
  font-size: 13px;
  line-height: 21px;
}

.menu u {
  text-underline-offset: 2px;
}

/* Toolbars */
.toolbar {
  display: flex;
  align-items: center;
  flex: none;
  height: 34px;
  border-top: 1px solid #fff;
  border-bottom: 1px solid #a5a597;
  background: #eeeeec;
}

.grip {
  width: 6px;
  height: 10px;
  margin: 0 4px 0 2px;
  background: repeating-linear-gradient(#a9a99d 0 1px, #fff 1px 2px, transparent 2px 3px);
}

.tool {
  display: flex;
  align-items: center;
  justify-content: center;
  flex: none;
  width: 30px;
  height: 30px;
}

.icon {
  width: 24px;
  height: 24px;
}

.sep {
  flex: none;
  width: 2px;
  height: 20px;
  margin: 0 4px;
  border-left: 1px solid #b0b0a4;
  background: #fff;
}

.caption {
  flex: none;
  width: 21px;
  text-align: center;
}

.caption-x {
  width: 22px;
  padding-left: 2px;
}

.caption-w {
  width: 25px;
}

.caption-t {
  width: 20px;
}

.lock-button {
  display: flex;
  align-items: center;
  justify-content: center;
  width: 31px;
  height: 24px;
}

.lock-icon {
  width: 12px;
  height: 14px;
}

.spin {
  display: flex;
  flex: none;
  width: 64px;
  height: 23px;
  border: 1px solid #a9a99d;
  border-radius: 1px;
  background: #fff;
}

.spin-text {
  flex: 1;
  min-width: 0;
  padding-left: 4px;
  outline: 0;
}

.arrows {
  display: flex;
  flex-direction: column;
  justify-content: center;
  flex: none;
  gap: 5px;
  width: 13px;
  padding-left: 3px;
  border-left: 1px solid #efefef;
}

.up,
.down,
.left,
.right {
  display: flex;
  align-items: center;
  justify-content: center;
}

.up::before,
.down::before,
.left::before,
.right::before {
  content: "";
  background: #111;
}

.up::before {
  width: 6px;
  height: 3px;
  clip-path: polygon(50% 0, 100% 100%, 0 100%);
}

.down::before {
  width: 6px;
  height: 3px;
  clip-path: polygon(0 0, 100% 0, 50% 100%);
}

.left::before {
  width: 4px;
  height: 8px;
  clip-path: polygon(0 50%, 100% 0, 100% 100%);
}

.right::before {
  width: 4px;
  height: 8px;
  clip-path: polygon(0 0, 100% 50%, 0 100%);
}

.disabled::before {
  background: #888;
}

.arrows .up,
.arrows .down {
  width: 6px;
}

.combo {
  display: flex;
  position: relative;
  flex: none;
  height: 23px;
  border: 1px solid #a9a99d;
  border-radius: 1px;
  background: linear-gradient(#f8f8f7, #dcdcd9);
}

.combo-unit {
  width: 48px;
}

.combo-select {
  width: 100%;
  padding-left: 4px;
  appearance: none;
  outline: 0;
}

.combo::before,
.combo::after {
  content: "";
  position: absolute;
  pointer-events: none;
}

.combo::before {
  top: 2px;
  bottom: 2px;
  right: 17px;
  width: 1px;
  background: #a9a99d;
}

.combo::after {
  top: 8px;
  right: 6px;
  width: 9px;
  height: 5px;
  background: #111;
  clip-path: polygon(0 0, 100% 0, 50% 100%);
}

.affect-label {
  padding: 0 11px 0 10px;
}

.toggles {
  display: flex;
  align-self: stretch;
}

.toggle {
  display: flex;
  align-items: center;
  justify-content: center;
  width: 30px;
  margin: 1px 0;
  border: 1px solid #a2a298;
  background: linear-gradient(#c8c8c6, #e0dfdd);
  box-shadow: inset -1px -1px #f4f4f2;
}

.toolbar-end {
  width: 4px;
  height: 2px;
  margin-left: auto;
  background: #a9a99d;
}

/* Work area */
.main {
  display: flex;
  flex: 1;
  min-height: 0;
}

.toolbox {
  display: flex;
  flex-direction: column;
  flex: none;
  width: 38px;
  padding-left: 2px;
}

.grip-top {
  flex: none;
  width: 10px;
  height: 6px;
  margin: 2px auto 4px 10px;
  background: repeating-linear-gradient(90deg, #a9a99d 0 1px, #fff 1px 2px);
}

.pressed {
  border: 1px solid #8c8c84;
  background: linear-gradient(135deg, #c2c2c0, #dddddb);
  box-shadow: inset -1px -1px #f4f4f2;
}

.dock-line {
  width: 34px;
  height: 1px;
  margin: auto 0 0 -2px;
  background: #a5a597;
}

.desk {
  display: grid;
  grid-template-columns: 13px 1fr 15px;
  grid-template-rows: 18px 1fr 15px;
  flex: 1;
  min-width: 0;
  padding-bottom: 2px;
}

.ruler-x {
  grid-column: 1 / 3;
  width: 100%;
  height: 18px;
  overflow: hidden;
}

.ruler-y {
  width: 13px;
  height: 100%;
  overflow: hidden;
}

.ruler-x,
.ruler-y {
  font-size: 9px;
  fill: #222;
}

.zoom-lock {
  height: 15px;
  margin-top: 3px;
  border: 1px solid #999;
  border-radius: 3px;
  background: #f4f4f4;
}

.zoom-lock svg {
  width: 13px;
  height: 13px;
}

.cms svg {
  width: 15px;
  height: 15px;
}

.canvas {
  position: relative;
  margin: 0 3px 1px 0;
  overflow: hidden;
  background: #fff;
}

.page {
  position: absolute;
  left: 308px;
  top: 36px;
  bottom: 0;
  width: 522px;
  border: 1px solid #646464;
  border-bottom: 0;
}

.page-shadow {
  position: absolute;
  left: 829px;
  top: 38px;
  bottom: 0;
  width: 3px;
  background: #646464;
}

.pointer {
  position: absolute;
  left: 914px;
  top: 394px;
  width: 14px;
  height: 20px;
}

.scroll-y {
  display: flex;
  flex-direction: column;
  padding: 4px 0 1px;
}

.step {
  flex: none;
  width: 15px;
  height: 15px;
  border: 1px solid #93938a;
  background: linear-gradient(135deg, #f7f7f6, #cfcfcc);
}

.step.up::before,
.step.down::before {
  width: 8px;
  height: 4px;
}

.track-y,
.track-x {
  display: flex;
  flex: 1;
  min-width: 0;
  min-height: 0;
}

.track-y {
  flex-direction: column;
  border-right: 1px solid #d0d0cc;
  background: linear-gradient(90deg, #d3d3d0, #f6f6f5);
}

.track-x {
  height: 15px;
  border-bottom: 1px solid #d0d0cc;
  background: linear-gradient(#d3d3d0, #f6f6f5);
}

.thumb-y,
.thumb-x {
  display: flex;
  align-items: center;
  justify-content: center;
  border: 1px solid #93938a;
  box-shadow: inset 1px 1px #fff;
}

.thumb-y {
  flex: 172;
  width: 15px;
  background: linear-gradient(90deg, #eaeae9, #c5c5c2);
}

.thumb-x {
  height: 15px;
  background: linear-gradient(#e8e8e7, #c5c5c2);
}

.thumb-y::before,
.thumb-x::before {
  content: "";
}

.thumb-y::before {
  width: 7px;
  height: 10px;
  background: repeating-linear-gradient(#8c8c84 0 1px, #fff 1px 2px);
}

.thumb-x::before {
  width: 10px;
  height: 7px;
  background: repeating-linear-gradient(90deg, #8c8c84 0 1px, #fff 1px 2px);
}

.space-top {
  flex: 204;
}

.space-bottom {
  flex: 245;
}

.scroll-x {
  display: flex;
  grid-column: 2;
  margin-right: 3px;
}

.scroll-x .space-left {
  flex: 730;
}

.scroll-x .thumb-x {
  flex: 538;
}

.scroll-x .space-right {
  flex: 33;
}

.dock-grip {
  align-self: center;
  flex: none;
  width: 2px;
  height: 10px;
  margin: 0 2px 0 5px;
  background: repeating-linear-gradient(#a9a99d 0 1px, #fff 1px 2px);
}

.snapbar {
  display: flex;
  flex-direction: column;
  flex: none;
  width: 30px;
  padding-left: 2px;
}

.snapbar .grip-top {
  margin-left: 8px;
}

.snap {
  display: flex;
  align-items: center;
  justify-content: center;
  flex: none;
  width: 26px;
  height: 26px;
}

.sep-h {
  flex: none;
  width: 16px;
  height: 2px;
  margin: 4px 5px 3px;
  border-top: 1px solid #a5a597;
  background: #fff;
}

.sep-h.wide {
  margin: 5px 5px 4px;
}

/* Palette */
.palette {
  display: flex;
  flex: none;
}

.palette-body {
  flex: 1;
  min-width: 0;
}

.swatches {
  display: flex;
  height: 20px;
  padding: 1px 1px 1px 2px;
  border: 1px solid #a5a597;
  border-left: 0;
  background: #fff;
}

.swatch {
  flex: 1;
  min-width: 0;
  height: 16px;
}

.none svg {
  width: 100%;
  height: 16px;
}

.scroll-palette {
  display: flex;
}

.scroll-palette .thumb-x {
  width: 288px;
}

.palette-menu {
  width: 12px;
  height: 12px;
}

/* Status bar */
.statusbar {
  display: flex;
  align-items: center;
  flex: none;
  height: 27px;
}

.style-box {
  display: grid;
  grid-template-columns: 48px 12px 61px;
  grid-auto-rows: 13px;
  flex: none;
  margin-left: 2px;
  line-height: 13px;
}

.fill-chip {
  background: #b69fb6;
}

.stroke-row {
  display: flex;
  justify-content: space-between;
}

.stroke-chip {
  width: 32px;
  background: #000;
}

.opacity-label {
  margin: 0 2px 0 4px;
}

.spin-opacity {
  width: 38px;
}

.status-line {
  align-self: stretch;
  flex: none;
  width: 2px;
  border-left: 1px solid #a9a99d;
  background: #fff;
}

.status-icon {
  flex: none;
  width: 18px;
  padding: 0 2px;
}

.status-line + .status-icon {
  margin-left: 2px;
}

.status-icon svg {
  width: 14px;
  height: 14px;
}

.combo-layer {
  width: 86px;
  height: 25px;
  font-weight: bold;
}

.message {
  flex: 1;
  min-width: 0;
  margin: 0 0 0 5px;
  overflow: hidden;
  font-size: 13px;
  white-space: nowrap;
}

.coords {
  display: grid;
  grid-template-columns: 21px 43px;
  flex: none;
  margin-left: 2px;
  font-family: "DejaVu Sans Mono", monospace;
  font-size: 12px;
  line-height: 13px;
}

.zoom-label {
  margin: 0 3px 0 8px;
}

.spin-zoom {
  width: 58px;
}

.spin-zoom .spin-text {
  padding-left: 12px;
}

.resize-grip {
  align-self: flex-end;
  width: 16px;
  height: 16px;
  margin-left: 2px;
}
```
FILE: app.js
```js
const SVG_NS = "http://www.w3.org/2000/svg";
const UNIT = 70; // screen pixels per 100 document units
const MINOR = UNIT / 10;

function add(parent, name, attrs, text) {
  const node = document.createElementNS(SVG_NS, name);
  for (const key in attrs) node.setAttribute(key, attrs[key]);
  if (text !== undefined) node.textContent = text;
  parent.appendChild(node);
}

function drawRulerX() {
  const ruler = document.getElementById("ruler-x");
  const origin = 321;
  const width = ruler.clientWidth - 6;
  for (let i = -43; origin + i * MINOR < width; i++) {
    const x = origin + i * MINOR;
    const size = i % 10 === 0 ? 15 : i % 2 === 0 ? 6 : 3;
    add(ruler, "rect", { x, y: 18 - size, width: 1, height: size });
    if (i % 10 === 0) add(ruler, "text", { x: x + 2, y: 8 }, String(i * 10));
  }
  add(ruler, "path", { d: "M923 12h9l-4 5z" });
}

function drawRulerY() {
  const ruler = document.getElementById("ruler-y");
  const first = 3;
  for (let i = 0; first + i * MINOR < ruler.clientHeight; i++) {
    const y = first + i * MINOR;
    const size = i % 10 === 0 ? 13 : i % 2 === 0 ? 5 : 2;
    add(ruler, "rect", { x: 13 - size, y, width: size, height: 1 });
    if (i % 10 === 0) {
      String(1100 - i * 10).split("").forEach((digit, n) => {
        const base = y + 9 + n * 8;
        if (base < ruler.clientHeight - 2) add(ruler, "text", { x: 0, y: base }, digit);
      });
    }
  }
  add(ruler, "path", { d: "M7 392v9l5-4z" });
}

const COLORS = (
  "000000 1a1a1a 333333 4d4d4d 666666 808080 999999 b3b3b3 cccccc e6e6e6 ececec f2f2f2 f9f9f9 ffffff " +
  "800000 ff0000 808000 ffff00 008000 00ff00 008080 00ffff 000080 0000ff 800080 ff00ff " +
  "2b0000 550000 800000 aa0000 d40000 ff0000 ff2a2a ff5555 ff8080 ffaaaa ffd5d5 " +
  "280b0b 501616 782121 a02c2c c83737 d35f5f de8787 e9afaf f4d7d7 " +
  "241c1c 483737 6c5353 916f6f ac9393 c8b7b7 e3dbdb " +
  "2b1100 552200 803300 aa4400 d45500 ff6600 ff7f2a ff9955 ffb380 ffccaa ffe6d5 " +
  "28170b 502d16 784421 a05a2c c87137 d38d5f deaa87 e9c6af f4e3d7 " +
  "241f1c 483e37 6c5d53 917c6f ac9d93 c8beb7 e3dedb " +
  "2b2200 554400 806600 aa8800 d4aa00 ffcc00 ffd42a ffdd55"
).split(" ");

function drawPalette() {
  const strip = document.getElementById("swatches");
  for (const color of COLORS) {
    const swatch = document.createElement("button");
    swatch.className = "swatch";
    swatch.style.background = "#" + color;
    swatch.setAttribute("aria-label", "#" + color);
    strip.appendChild(swatch);
  }
}

drawRulerX();
drawRulerY();
drawPalette();
```
